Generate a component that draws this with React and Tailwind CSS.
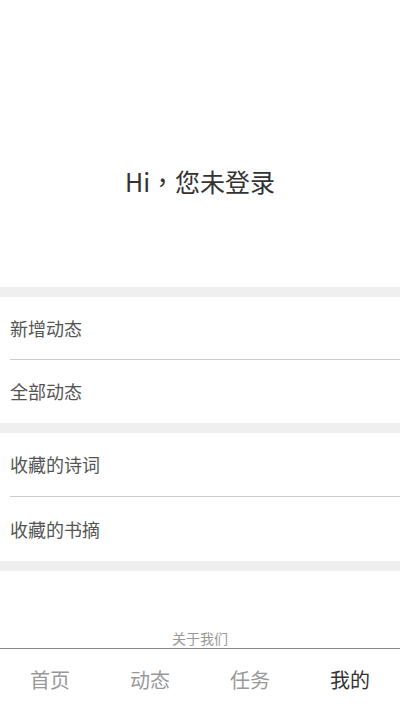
import React from "react";

const font = { fontFamily: '"Noto Sans CJK SC", "Noto Sans", sans-serif' };

function Row({ children, h }) {
  return (
    <div className={`flex items-center pl-[10px] text-[18px] text-[#555] ${h}`}>
      {children}
    </div>
  );
}

function Bar() {
  return <div className="h-[10px] bg-[#efefef]" />;
}

function Divider() {
  return <div className="ml-[10px] h-px bg-[#cccccc]" />;
}

export default function App() {
  const tabs = ["首页", "动态", "任务", "我的"];
  return (
    <div
      className="flex h-[711px] w-[400px] flex-col overflow-hidden bg-white"
      style={font}
    >
      <div className="h-[287px] pt-[166px] text-center text-[25px] leading-[30px] text-[#333]">
        Hi<span className="font-['Noto_Sans_CJK_TC',sans-serif]">，</span>您未登录
      </div>
      <Bar />
      <Row h="h-[62px]">新增动态</Row>
      <Divider />
      <Row h="h-[63px]">全部动态</Row>
      <Bar />
      <Row h="h-[63px]">收藏的诗词</Row>
      <Divider />
      <Row h="h-[64px]">收藏的书摘</Row>
      <Bar />
      <div className="flex flex-1 items-end justify-center">
        <span className="text-[14px] leading-[20px] text-[#999]">关于我们</span>
      </div>
      <div className="flex h-[63px] border-t border-[#888]">
        {tabs.map((t, i) => (
          <div
            key={t}
            className={`flex flex-1 items-center justify-center text-[20px] ${
              i === 3 ? "text-[#333]" : "text-[#999]"
            }`}
          >
            {t}
          </div>
        ))}
      </div>
    </div>
  );
}
